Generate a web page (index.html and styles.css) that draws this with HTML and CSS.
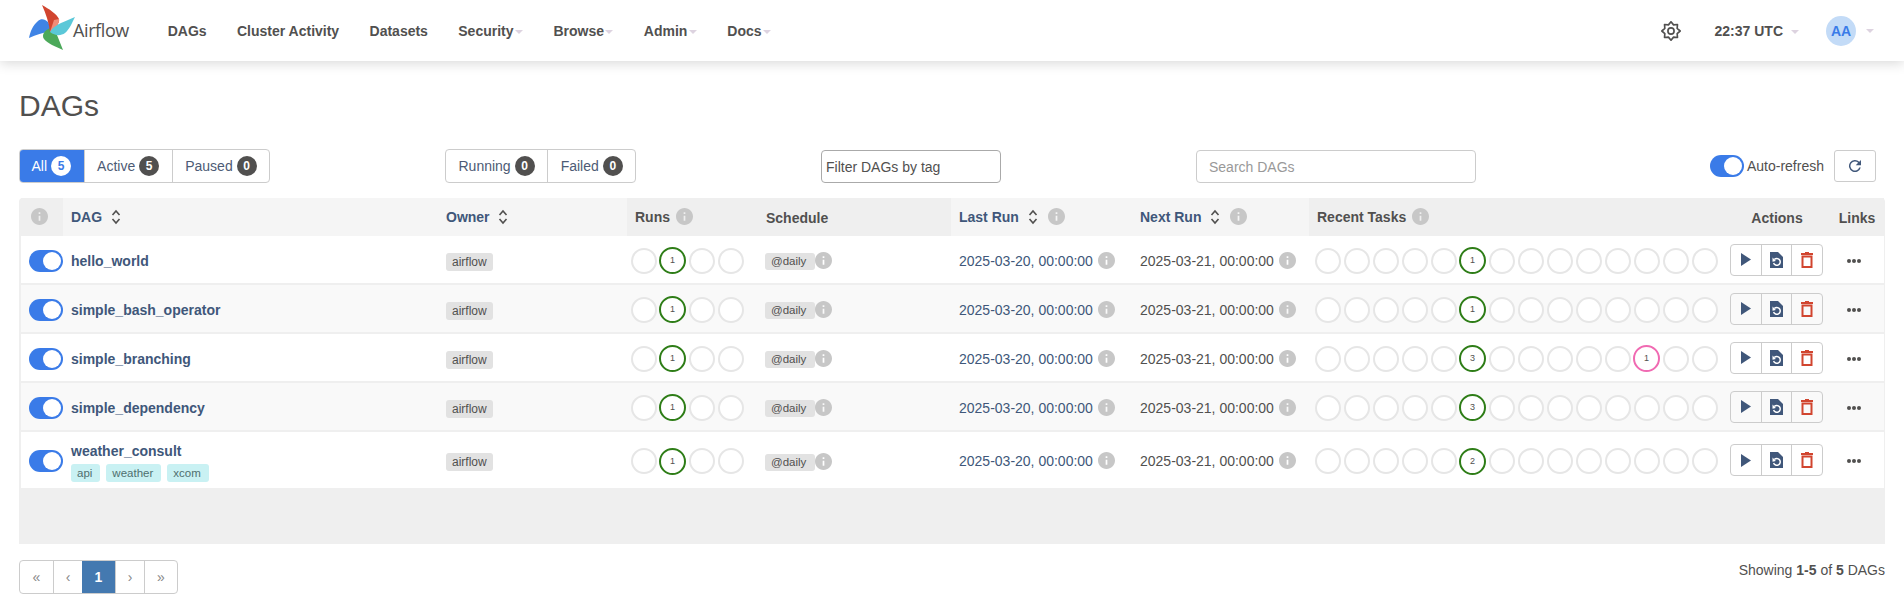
FILE: index.html
```html
<!DOCTYPE html>
<html lang="en">
<head>
<meta charset="utf-8">
<title>DAGs - Airflow</title>
<link rel="stylesheet" href="styles.css">
</head>
<body>
<svg class="defs" width="0" height="0" aria-hidden="true">
  <symbol id="i-info" viewBox="2 2 20 20"><path d="M12 2C6.48 2 2 6.48 2 12s4.48 10 10 10 10-4.48 10-10S17.52 2 12 2zm1 15h-2v-6h2v6zm0-8h-2V7h2v2z"/></symbol>
  <symbol id="i-sort" viewBox="0 0 10 16"><path d="M1.500 6 5 2l3.500 4M1.500 10 5 14l3.500-4" fill="none" stroke="currentColor" stroke-width="1.600"/></symbol>
  <symbol id="i-play" viewBox="0 0 10 13"><path d="M0 0v13l10-6.500z"/></symbol>
  <symbol id="i-redo" viewBox="0 0 13 16"><path d="M0 0h8l5 5v11H0z"/><path d="M4.300 7.600A3.400 3.400 0 1 1 3.600 11" fill="none" stroke="#fff" stroke-width="1.500"/><path d="M2.500 5.500v4.300l3.400-.7z" fill="#fff"/></symbol>
  <symbol id="i-trash" viewBox="0 0 12 16"><path d="M4 0h4v1h4v2H0V1h4z"/><rect x="1.500" y="4.500" width="9" height="10.500" fill="none" stroke="currentColor" stroke-width="2"/></symbol>
</svg>

<header class="nav">
  <a class="brand">
    <svg class="logo" viewBox="0 0 46 45" width="46" height="45">
      <path fill="#3f84e5" d="M0 33C1 27 4 20 9 16C12 13 16 14 19 17C21 20 22 24 21 27C14 27 7 30 0 33z"/>
      <path fill="#4ca95a" d="M34 45C27 42 18 38 15 34C12 30 16 25 21 23L28 30C30 35 32 40 34 45z"/>
      <path fill="#d1452f" d="M13 0C20 4 28 9 30 14C31 18 26 24 21 27C20 18 17 9 13 0z"/>
      <path fill="#f08c77" d="M30 14C31 18 26 24 21 27L25 15z"/>
      <path fill="#5bc8d8" d="M46 12C43 18 40 25 36 28C32 31 26 31 21 27C24 22 28 20 32 18C37 16 41 14 46 12z"/>
    </svg>
    <span class="brand-name">Airflow</span>
  </a>
  <nav class="menu">
    <a class="menu-link">DAGs</a>
    <a class="menu-link">Cluster Activity</a>
    <a class="menu-link">Datasets</a>
    <a class="menu-link">Security<i class="caret"></i></a>
    <a class="menu-link">Browse<i class="caret"></i></a>
    <a class="menu-link">Admin<i class="caret"></i></a>
    <a class="menu-link">Docs<i class="caret"></i></a>
  </nav>
  <div class="nav-right">
    <svg class="gear" viewBox="0 0 24 24" width="20" height="20"><path d="M12 1 15.060 4.610 19.780 4.220 19.390 8.940 23 12 19.390 15.060 19.780 19.780 15.060 19.390 12 23 8.940 19.390 4.220 19.780 4.610 15.060 1 12 4.610 8.940 4.220 4.220 8.940 4.610z"/><circle cx="12" cy="12" r="3.700"/></svg>
    <a class="clock">22:37 UTC<i class="caret"></i></a>
    <a class="user"><span class="avatar">AA</span><i class="caret"></i></a>
  </div>
</header>

<main class="page">
  <h1 class="title">DAGs</h1>

  <div class="filters">
    <div class="btn-group">
      <a class="seg seg-active">All <b class="count count-light">5</b></a>
      <a class="seg">Active <b class="count">5</b></a>
      <a class="seg">Paused <b class="count">0</b></a>
    </div>
    <div class="btn-group">
      <a class="seg">Running <b class="count">0</b></a>
      <a class="seg">Failed <b class="count">0</b></a>
    </div>
    <input class="field field-tag" type="text" placeholder="Filter DAGs by tag">
    <div class="search-row">
      <input class="field field-search" type="text" placeholder="Search DAGs">
      <div class="refresh">
        <span class="switch"></span>
        <span class="refresh-label">Auto-refresh</span>
        <button class="refresh-btn" type="button" aria-label="Refresh">
          <svg viewBox="0 0 24 24" width="18" height="18"><path d="M17.650 6.350A8 8 0 1 0 19.700 14h-2.100a6 6 0 1 1-1.400-6.200L13 11h7V4z"/></svg>
        </button>
      </div>
    </div>
  </div>

  <div class="table-wrap">
    <table class="dags">
      <colgroup>
        <col class="w-state"><col class="w-dag"><col class="w-owner"><col class="w-runs"><col class="w-sched"><col class="w-last"><col class="w-next"><col class="w-recent"><col class="w-actions"><col class="w-links">
      </colgroup>
      <thead>
        <tr>
          <th class="th-dark th-state"><svg class="info"><use href="#i-info"/></svg></th>
          <th class="link">DAG <svg class="sort"><use href="#i-sort"/></svg></th>
          <th class="link">Owner <svg class="sort"><use href="#i-sort"/></svg></th>
          <th class="th-dark">Runs <svg class="info"><use href="#i-info"/></svg></th>
          <th class="th-dark th-low">Schedule</th>
          <th class="link">Last Run <svg class="sort"><use href="#i-sort"/></svg> <svg class="info info-sorted"><use href="#i-info"/></svg></th>
          <th class="link">Next Run <svg class="sort"><use href="#i-sort"/></svg> <svg class="info info-sorted"><use href="#i-info"/></svg></th>
          <th class="th-dark">Recent Tasks <svg class="info"><use href="#i-info"/></svg></th>
          <th class="th-dark th-center">Actions</th>
          <th class="th-dark th-center">Links</th>
        </tr>
      </thead>
      <tbody>
        <tr>
          <td class="td-state"><span class="switch"></span></td>
          <td><a class="dag-name">hello_world</a></td>
          <td><span class="badge">airflow</span></td>
          <td class="td-runs"><div class="circles"><span class="c"></span><span class="c c-ok">1</span><span class="c"></span><span class="c"></span></div></td>
          <td><span class="badge badge-sched">@daily</span><svg class="info info-tight"><use href="#i-info"/></svg></td>
          <td class="date date-link">2025-03-20, 00:00:00 <svg class="info"><use href="#i-info"/></svg></td>
          <td class="date">2025-03-21, 00:00:00 <svg class="info"><use href="#i-info"/></svg></td>
          <td class="td-tasks"><div class="circles"><span class="c"></span><span class="c"></span><span class="c"></span><span class="c"></span><span class="c"></span><span class="c c-ok">1</span><span class="c"></span><span class="c"></span><span class="c"></span><span class="c"></span><span class="c"></span><span class="c"></span><span class="c"></span><span class="c"></span></div></td>
          <td class="td-actions"><div class="actions"><a class="act"><svg class="ico-play"><use href="#i-play"/></svg></a><a class="act"><svg class="ico-redo"><use href="#i-redo"/></svg></a><a class="act"><svg class="ico-del"><use href="#i-trash"/></svg></a></div></td>
          <td class="td-links"><span class="dots"><i></i><i></i><i></i></span></td>
        </tr>
        <tr class="alt">
          <td class="td-state"><span class="switch"></span></td>
          <td><a class="dag-name">simple_bash_operator</a></td>
          <td><span class="badge">airflow</span></td>
          <td class="td-runs"><div class="circles"><span class="c"></span><span class="c c-ok">1</span><span class="c"></span><span class="c"></span></div></td>
          <td><span class="badge badge-sched">@daily</span><svg class="info info-tight"><use href="#i-info"/></svg></td>
          <td class="date date-link">2025-03-20, 00:00:00 <svg class="info"><use href="#i-info"/></svg></td>
          <td class="date">2025-03-21, 00:00:00 <svg class="info"><use href="#i-info"/></svg></td>
          <td class="td-tasks"><div class="circles"><span class="c"></span><span class="c"></span><span class="c"></span><span class="c"></span><span class="c"></span><span class="c c-ok">1</span><span class="c"></span><span class="c"></span><span class="c"></span><span class="c"></span><span class="c"></span><span class="c"></span><span class="c"></span><span class="c"></span></div></td>
          <td class="td-actions"><div class="actions"><a class="act"><svg class="ico-play"><use href="#i-play"/></svg></a><a class="act"><svg class="ico-redo"><use href="#i-redo"/></svg></a><a class="act"><svg class="ico-del"><use href="#i-trash"/></svg></a></div></td>
          <td class="td-links"><span class="dots"><i></i><i></i><i></i></span></td>
        </tr>
        <tr>
          <td class="td-state"><span class="switch"></span></td>
          <td><a class="dag-name">simple_branching</a></td>
          <td><span class="badge">airflow</span></td>
          <td class="td-runs"><div class="circles"><span class="c"></span><span class="c c-ok">1</span><span class="c"></span><span class="c"></span></div></td>
          <td><span class="badge badge-sched">@daily</span><svg class="info info-tight"><use href="#i-info"/></svg></td>
          <td class="date date-link">2025-03-20, 00:00:00 <svg class="info"><use href="#i-info"/></svg></td>
          <td class="date">2025-03-21, 00:00:00 <svg class="info"><use href="#i-info"/></svg></td>
          <td class="td-tasks"><div class="circles"><span class="c"></span><span class="c"></span><span class="c"></span><span class="c"></span><span class="c"></span><span class="c c-ok">3</span><span class="c"></span><span class="c"></span><span class="c"></span><span class="c"></span><span class="c"></span><span class="c c-skip">1</span><span class="c"></span><span class="c"></span></div></td>
          <td class="td-actions"><div class="actions"><a class="act"><svg class="ico-play"><use href="#i-play"/></svg></a><a class="act"><svg class="ico-redo"><use href="#i-redo"/></svg></a><a class="act"><svg class="ico-del"><use href="#i-trash"/></svg></a></div></td>
          <td class="td-links"><span class="dots"><i></i><i></i><i></i></span></td>
        </tr>
        <tr class="alt">
          <td class="td-state"><span class="switch"></span></td>
          <td><a class="dag-name">simple_dependency</a></td>
          <td><span class="badge">airflow</span></td>
          <td class="td-runs"><div class="circles"><span class="c"></span><span class="c c-ok">1</span><span class="c"></span><span class="c"></span></div></td>
          <td><span class="badge badge-sched">@daily</span><svg class="info info-tight"><use href="#i-info"/></svg></td>
          <td class="date date-link">2025-03-20, 00:00:00 <svg class="info"><use href="#i-info"/></svg></td>
          <td class="date">2025-03-21, 00:00:00 <svg class="info"><use href="#i-info"/></svg></td>
          <td class="td-tasks"><div class="circles"><span class="c"></span><span class="c"></span><span class="c"></span><span class="c"></span><span class="c"></span><span class="c c-ok">3</span><span class="c"></span><span class="c"></span><span class="c"></span><span class="c"></span><span class="c"></span><span class="c"></span><span class="c"></span><span class="c"></span></div></td>
          <td class="td-actions"><div class="actions"><a class="act"><svg class="ico-play"><use href="#i-play"/></svg></a><a class="act"><svg class="ico-redo"><use href="#i-redo"/></svg></a><a class="act"><svg class="ico-del"><use href="#i-trash"/></svg></a></div></td>
          <td class="td-links"><span class="dots"><i></i><i></i><i></i></span></td>
        </tr>
        <tr class="tall">
          <td class="td-state"><span class="switch"></span></td>
          <td>
            <a class="dag-name dag-name-block">weather_consult</a>
            <div class="tags"><span class="tag">api</span><span class="tag">weather</span><span class="tag">xcom</span></div>
          </td>
          <td><span class="badge">airflow</span></td>
          <td class="td-runs"><div class="circles"><span class="c"></span><span class="c c-ok">1</span><span class="c"></span><span class="c"></span></div></td>
          <td><span class="badge badge-sched">@daily</span><svg class="info info-tight"><use href="#i-info"/></svg></td>
          <td class="date date-link">2025-03-20, 00:00:00 <svg class="info"><use href="#i-info"/></svg></td>
          <td class="date">2025-03-21, 00:00:00 <svg class="info"><use href="#i-info"/></svg></td>
          <td class="td-tasks"><div class="circles"><span class="c"></span><span class="c"></span><span class="c"></span><span class="c"></span><span class="c"></span><span class="c c-ok">2</span><span class="c"></span><span class="c"></span><span class="c"></span><span class="c"></span><span class="c"></span><span class="c"></span><span class="c"></span><span class="c"></span></div></td>
          <td class="td-actions"><div class="actions"><a class="act"><svg class="ico-play"><use href="#i-play"/></svg></a><a class="act"><svg class="ico-redo"><use href="#i-redo"/></svg></a><a class="act"><svg class="ico-del"><use href="#i-trash"/></svg></a></div></td>
          <td class="td-links"><span class="dots"><i></i><i></i><i></i></span></td>
        </tr>
      </tbody>
    </table>
  </div>

  <div class="foot">
    <div class="pager">
      <a class="pg pg-wide">«</a><a class="pg">‹</a><a class="pg pg-wide pg-active">1</a><a class="pg">›</a><a class="pg pg-wide">»</a>
    </div>
    <p class="showing">Showing <b>1-5</b> of <b>5</b> DAGs</p>
  </div>
</main>
</body>
</html>
```

FILE: styles.css
```css
* { box-sizing: border-box; }
html, body { margin: 0; padding: 0; }
body {
  font-family: "Liberation Sans", Arial, sans-serif;
  font-size: 14px;
  line-height: 20px;
  color: #51504f;
  background: #fff;
  overflow: hidden;
}
a { color: inherit; text-decoration: none; }
.defs { position: absolute; }

/* top bar */
.nav {
  height: 61px;
  display: flex;
  align-items: center;
  padding-left: 29px;
  background: #fff;
  box-shadow: 0 2px 12px rgba(0, 0, 0, .16);
}
.brand { display: flex; align-items: center; width: 123.500px; height: 61px; }
.logo { flex: none; margin: 0 -2px 6px 0; }
.brand-name { font-family: "Open Sans", sans-serif; font-size: 18px; color: #51504f; margin-bottom: 2px; letter-spacing: -.4px; }
.menu { display: flex; align-items: center; }
.menu-link {
  padding: 0 15.200px;
  font-weight: 700;
  font-size: 14px;
  color: #51504f;
  white-space: nowrap;
}
.caret {
  display: inline-block;
  width: 0;
  height: 0;
  margin-left: 1.500px;
  border-top: 4px solid #ddd3e0;
  border-left: 4px solid transparent;
  border-right: 4px solid transparent;
  vertical-align: middle;
}
.nav-right { margin-left: auto; display: flex; align-items: center; padding-right: 30px; }
.gear { fill: none; stroke: #51504f; stroke-width: 2; stroke-linejoin: round; display: block; margin-right: 34px; }
.clock { font-weight: 700; margin-right: 27px; }
.clock .caret { margin-left: 8px; }
.user { display: flex; align-items: center; }
.user .caret { margin-left: 10px; }
.avatar {
  width: 30px;
  height: 30px;
  border-radius: 50%;
  background: #c3dbf7;
  color: #3a7be8;
  font-weight: 700;
  font-size: 14px;
  line-height: 30px;
  text-align: center;
}

/* page */
.page { padding: 0 19px; }
.title { margin: 22px 0 0; height: 45px; font-size: 30px; line-height: 45px; font-weight: 400; color: #51504f; }
.filters {
  display: grid;
  grid-template-columns: 426px 376px 375px 1fr;
  margin-top: 21px;
  height: 34px;
}
.btn-group {
  display: inline-flex;
  justify-self: start;
  height: 34px;
  border: 1px solid #ccc;
  border-radius: 4px;
  overflow: hidden;
}
.seg {
  display: flex;
  align-items: center;
  gap: 4px;
  padding: 0 12.500px;
  color: #4d5b75;
  white-space: nowrap;
  border-left: 1px solid #ccc;
}
.seg:first-child { border-left: 0; }
.seg-active { background: #3a7be8; color: #fff; margin: -1px 0 -1px -1px; }
.count {
  min-width: 20px;
  height: 20px;
  padding: 0 6px;
  border-radius: 10px;
  background: #51504f;
  color: #fff;
  font-size: 12px;
  line-height: 20px;
  text-align: center;
}
.count-light { background: #fff; color: #3a7be8; }
.field {
  height: 33px;
  padding: 0 4px;
  font: 14px "Liberation Sans", Arial, sans-serif;
  color: #51504f;
  border: 1px solid #ccc;
  border-radius: 4px;
  outline: 0;
}
.field-tag { width: 180px; border-color: #aaa; margin-top: 1px; }
.field-tag::placeholder { color: #51504f; opacity: 1; }
.field-search { width: 280px; padding: 0 12px; margin-top: 1px; }
.field-search::placeholder { color: #999; opacity: 1; }
.search-row { display: flex; justify-content: space-between; }
.refresh { display: flex; align-items: center; height: 32px; margin-top: 1px; padding-right: 9px; }
.refresh-label { margin-left: 3px; }
.refresh-btn {
  width: 42px;
  height: 32px;
  margin-left: 10px;
  padding: 0;
  display: flex;
  align-items: center;
  justify-content: center;
  border: 1px solid #ccc;
  border-radius: 3px;
  background: #fff;
}
.refresh-btn svg { fill: #40577a; }

.switch {
  display: inline-block;
  position: relative;
  width: 34px;
  height: 22px;
  border-radius: 11px;
  background: #3a7be8;
  vertical-align: middle;
}
.switch::after {
  content: "";
  position: absolute;
  right: 2px;
  top: 2px;
  width: 18px;
  height: 18px;
  border-radius: 50%;
  background: #fff;
}

/* table */
.table-wrap {
  margin-top: 15px;
  height: 346px;
  padding: 0 2px;
  background: #efefef;
  border-radius: 4px 4px 0 0;
}
.dags { width: 1863px; table-layout: fixed; border-collapse: separate; border-spacing: 0; }
.w-state { width: 42px; }
.w-dag { width: 375px; }
.w-owner { width: 189px; }
.w-runs { width: 131px; }
.w-sched { width: 193px; }
.w-last { width: 181px; }
.w-next { width: 177px; }
.w-recent { width: 415px; }
.w-actions { width: 110px; }
.w-links { width: 50px; }
.dags th {
  height: 38px;
  padding: 0 8px;
  text-align: left;
  font-weight: 700;
  font-size: 14px;
  white-space: nowrap;
  color: #51504f;
  background: #f5f5f5;
}
.dags th.link { color: #40577a; }
.dags th.th-dark { background: #efefef; }
.dags th.th-low { padding-top: 2px; }
.dags th.th-center { text-align: center; padding: 2px 4px 0 0; }
.dags th.th-state { padding-left: 10px; }
.dags td {
  height: 49px;
  padding: 2px 8px 0;
  background: #fff;
  border-bottom: 2px solid #efefef;
  white-space: nowrap;
  vertical-align: middle;
}
.dags tr.alt td { background: #f9f9f9; }
.dags tr.tall td { height: 56px; border-bottom: 0; }
.dags td.td-state { padding: 2px 0 0 8px; }
.info { width: 17px; height: 17px; fill: #c7c7c7; vertical-align: -3px; margin-left: 2px; }
.date .info { margin-left: 1px; }
.info-tight { margin-left: 0; vertical-align: middle; margin-top: -2px; }
.info-sorted { margin-left: 6px; }
.sort { width: 10px; height: 16px; margin-left: 5px; vertical-align: -3px; color: #51504f; }
.th-state .info { margin-left: 0; }
.dag-name { font-weight: 700; color: #40577a; }
.dag-name-block { display: block; line-height: 18px; margin-top: 1px; }
.tags { display: flex; gap: 6px; margin-top: 4px; }
.tag {
  height: 18px;
  padding: 0 8px 0 6px;
  border-radius: 3px;
  background: #c9f1f3;
  color: #4f6f6f;
  font-size: 11.500px;
  line-height: 18px;
}
.badge {
  display: inline-block;
  height: 18px;
  padding: 0 6px;
  border-radius: 3px;
  background: #e2e2e2;
  color: #51504f;
  font-size: 12px;
  line-height: 18px;
  vertical-align: middle;
}
.badge-sched { height: 17px; margin-left: -1px; padding: 0 8.500px 0 6px; font-size: 11.500px; line-height: 17px; }
.dags td.td-runs { padding: 2px 0 0 4px; }
.dags td.td-tasks { padding: 2px 0 0 6px; }
.circles { display: flex; gap: 3px; align-items: center; }
.c {
  flex: none;
  width: 26px;
  height: 26px;
  border: 2px solid #e6e6e6;
  border-radius: 50%;
  font-size: 9px;
  line-height: 23px;
  text-align: center;
  color: #51504f;
  background: #fff;
}
.c-ok { width: 27px; height: 27px; margin-left: -1px; border-color: #2e7d17; }
.c-skip { width: 27px; height: 27px; margin-left: -1px; border-color: #f06ab2; }
.date { color: #51504f; }
.dags td.date-link { color: #40577a; }
.dags td.td-actions { padding: 0 0 0 6px; }
.actions {
  display: inline-flex;
  height: 32px;
  width: 93px;
  border: 1px solid #ccc;
  border-radius: 4px;
  vertical-align: middle;
}
.act { flex: 1; display: flex; align-items: center; justify-content: center; border-left: 1px solid #ccc; }
.act:first-child { border-left: 0; }
.ico-play { width: 10px; height: 13px; fill: #40577a; }
.ico-redo { width: 13px; height: 16px; fill: #40577a; }
.ico-del { width: 12px; height: 16px; fill: #d1452f; color: #d1452f; }
.dags td.td-links { padding: 0; text-align: center; }
.dots { display: inline-flex; gap: 1px; vertical-align: middle; margin-left: -10px; }
.dots i { width: 4px; height: 4px; border-radius: 50%; background: #51504f; }

/* footer */
.foot { display: flex; justify-content: space-between; margin-top: 16px; }
.pager {
  display: flex;
  height: 34px;
  border: 1px solid #ccc;
  border-radius: 4px;
  overflow: hidden;
}
.pg {
  width: 29px;
  display: flex;
  align-items: center;
  justify-content: center;
  border-left: 1px solid #ccc;
  color: #888;
}
.pg:first-child { border-left: 0; }
.pg-wide { width: 33px; }
.pg-active { background: #4479b0; color: #fff; font-weight: 700; border-left: 0; }
.showing { margin: 0; line-height: 20px; }
```
